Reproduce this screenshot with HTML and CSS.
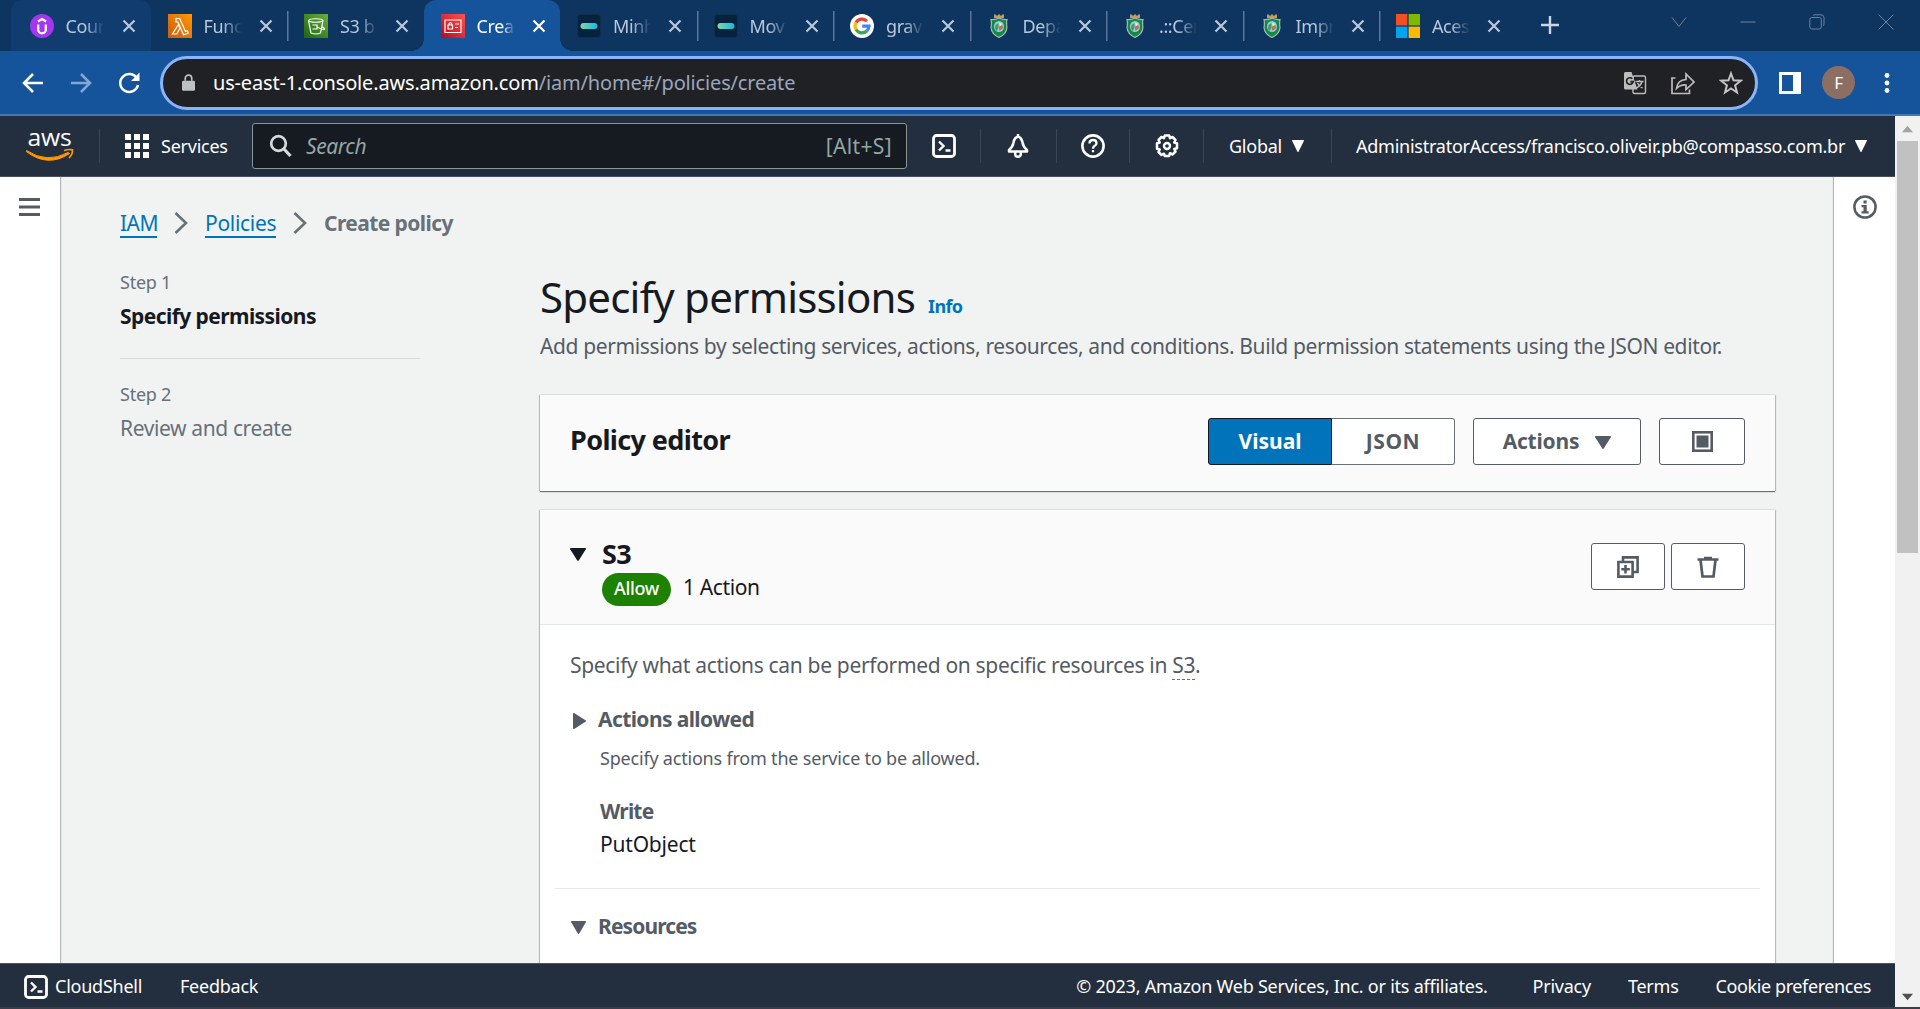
FILE: index.html
```html
<!DOCTYPE html>
<html lang="en">
<head>
<meta charset="utf-8">
<title>Create policy | IAM | Global</title>
<link rel="stylesheet" href="styles.css">
</head>
<body>
<svg class="defs" aria-hidden="true">
  <defs>
    <linearGradient id="gLambda" x1="0" y1="1" x2="1" y2="0"><stop offset="0" stop-color="#cc5a10"/><stop offset="1" stop-color="#ff9900"/></linearGradient>
    <linearGradient id="gS3" x1="0" y1="1" x2="1" y2="0"><stop offset="0" stop-color="#1b660f"/><stop offset="1" stop-color="#6cae3e"/></linearGradient>
    <linearGradient id="gIam" x1="0" y1="1" x2="1" y2="0"><stop offset="0" stop-color="#bd0816"/><stop offset="1" stop-color="#ff5252"/></linearGradient>
    <linearGradient id="gPill" x1="0" y1="0" x2="1" y2="0"><stop offset="0" stop-color="#7fd6a8"/><stop offset="1" stop-color="#12b8e6"/></linearGradient>
    <symbol id="x" viewBox="0 0 24 24"><path d="M6.500 6.500l11 11M17.500 6.500l-11 11" fill="none" stroke="currentColor" stroke-width="2.200"/></symbol>
    <symbol id="pill" viewBox="0 0 24 24"><rect x=".5" y=".5" width="23" height="23" rx="3" fill="#06223d" stroke="#0f3048"/><rect x="3.500" y="9" width="17" height="6" rx="3" fill="url(#gPill)"/></symbol>
    <symbol id="crest" viewBox="0 0 24 24"><path d="M7 .5h2v1h2v-1h2v1h2v-1h2v3.700H7z" fill="#c89a5a"/><path d="M4 5.500Q8 6 12 4q4 2 8 1.500-.8 4 0 8Q19.500 20 12 23.500 4.500 20 4 13.500q.8-4 0-8z" fill="#0f8a4a" stroke="#a9b8ae" stroke-width="1.200"/><ellipse cx="12" cy="12.500" rx="5" ry="5.500" fill="#a3c6cf"/><path d="M8.500 11l3-2v4l-1.500 4-2-2z" fill="#3f9a72"/><path d="M11.500 13l4-2 .5 3-3.500 3z" fill="#b5764a"/><path d="M12 8.500l3 1.500-2 2z" fill="#e8efe9"/></symbol>
    <symbol id="shell" viewBox="0 0 24 24"><rect x="1.500" y="1.500" width="21" height="21" rx="3" fill="none" stroke="currentColor" stroke-width="2.800"/><path d="M7 7.500l4.500 4.500L7 16.500M13.500 16.500h5" fill="none" stroke="currentColor" stroke-width="2.400"/></symbol>
    <symbol id="down" viewBox="0 0 18 16" preserveAspectRatio="none"><path d="M1 0h16a1 1 0 0 1 .8 1.400L10 15.200a1.200 1.200 0 0 1-2 0L.2 1.400A1 1 0 0 1 1 0z" fill="currentColor"/></symbol>
  </defs>
</svg>

<header class="browser">
  <div class="tabs">
    <div class="tab hover"><svg class="fav" viewBox="0 0 24 24"><circle cx="12" cy="12" r="12" fill="#a435f0"/><path d="M8.200 10.500v5a3.800 3.800 0 0 0 7.600 0v-5M8 7.500l4-2.500 4 2.500" fill="none" stroke="#fff" stroke-width="2.300"/></svg><span class="title">Cour</span><svg class="close"><use href="#x"/></svg></div>
    <div class="tab"><svg class="fav" viewBox="0 0 24 24"><path fill="url(#gLambda)" d="M0 0h24v24H0z"/><path d="M8 4.500h3.700l5.800 13 2-.7.800 2.400-4.800 1.600L10 8H8zM10.400 10.800L12 14 8.800 20H4.500z" fill="none" stroke="#fff" stroke-width="1.200"/></svg><span class="title">Func</span><svg class="close"><use href="#x"/></svg></div>
    <div class="tab line"><svg class="fav" viewBox="0 0 24 24"><path fill="url(#gS3)" d="M0 0h24v24H0z"/><path d="M4.500 6.500L7 19q5 2 9.500 0L19 6.500M4.500 6.500a7.300 2 0 0 0 14.500 0 7.300 2 0 0 0-14.500 0zM8.500 11h4.500v4H8.500M13 13q6 3 7.500 2.200.3-1-3-3" fill="none" stroke="#fff" stroke-width="1.200"/></svg><span class="title">S3 b</span><svg class="close"><use href="#x"/></svg></div>
    <div class="tab active"><svg class="fav" viewBox="0 0 24 24"><path fill="url(#gIam)" d="M0 0h24v24H0z"/><path d="M4 6h16v12.500H4zM7 11h4.500v4H7zM8 11V9.500q1.200-1.500 2.500 0V11M14 10h4M14 13.500h3" fill="none" stroke="#fff" stroke-width="1.200"/></svg><span class="title">Crea</span><svg class="close"><use href="#x"/></svg></div>
    <div class="tab"><svg class="fav"><use href="#pill"/></svg><span class="title">Minh</span><svg class="close"><use href="#x"/></svg></div>
    <div class="tab line"><svg class="fav"><use href="#pill"/></svg><span class="title">Mov</span><svg class="close"><use href="#x"/></svg></div>
    <div class="tab line"><svg class="fav" viewBox="0 0 24 24"><circle cx="12" cy="12" r="12" fill="#fff"/><g fill="none" stroke-width="3.200"><path d="M6 8.500A7 7 0 0 1 17 7.200" stroke="#ea4335"/><path d="M6 15.500a7 7 0 0 1 0-7" stroke="#fbbc05"/><path d="M16.800 17A7 7 0 0 1 6 15.500" stroke="#34a853"/><path d="M12.200 12.200H19a7 7 0 0 1-2.200 4.800" stroke="#4285f4"/></g></svg><span class="title">grav</span><svg class="close"><use href="#x"/></svg></div>
    <div class="tab line"><svg class="fav"><use href="#crest"/></svg><span class="title">Depa</span><svg class="close"><use href="#x"/></svg></div>
    <div class="tab line"><svg class="fav"><use href="#crest"/></svg><span class="title">.::Cer</span><svg class="close"><use href="#x"/></svg></div>
    <div class="tab line"><svg class="fav"><use href="#crest"/></svg><span class="title">Impr</span><svg class="close"><use href="#x"/></svg></div>
    <div class="tab line"><svg class="fav" viewBox="0 0 24 24"><path d="M0 0h11.400v11.400H0z" fill="#f25022"/><path d="M12.600 0H24v11.400H12.600z" fill="#7fba00"/><path d="M0 12.600h11.400V24H0z" fill="#00a4ef"/><path d="M12.600 12.600H24V24H12.600z" fill="#ffb900"/></svg><span class="title">Aces</span><svg class="close"><use href="#x"/></svg></div>
    <div class="newtab"><svg width="18" height="18" viewBox="0 0 18 18"><path d="M9 0v18M0 9h18" stroke="#c9d6e6" stroke-width="2.400"/></svg></div>
    <div class="winctl">
      <svg viewBox="0 0 16 16"><path d="M1 3.500l7 9 7-9"/></svg>
      <svg viewBox="0 0 16 16"><path d="M.5 8h15"/></svg>
      <svg viewBox="0 0 16 16"><rect x=".8" y="3.500" width="11.500" height="11.500" rx="2"/><path d="M4 1.500q.5-.7 2-.7h6q3 0 3 3v6q0 1.800-1 2.200"/></svg>
      <svg viewBox="0 0 16 16"><path d="M.5.500l15 15M15.500.500l-15 15"/></svg>
    </div>
  </div>
  <div class="toolbar">
    <svg class="tool" viewBox="0 0 24 24"><path d="M22 12H3M12 3l-9 9 9 9" stroke="#fff"/></svg>
    <svg class="tool fwd" viewBox="0 0 24 24"><path d="M2 12h19M12 3l9 9-9 9" stroke="#86a6d3"/></svg>
    <svg class="tool reload" viewBox="0 0 24 24"><path d="M20 7.500A9 9 0 1 0 21 14" stroke="#fff"/><path d="M22.500 1.500V10H14z" fill="#fff"/></svg>
    <div class="omnibox">
      <svg class="lock" viewBox="0 0 14 18"><path d="M1.500 7h11Q14 7 14 8.500v8q0 1.500-1.500 1.500h-11Q0 18 0 16.500v-8Q0 7 1.500 7z" fill="#bdc1c6"/><path d="M3.500 7V4.500a3.500 3.500 0 0 1 7 0V7" fill="none" stroke="#bdc1c6" stroke-width="1.800"/></svg>
      <span class="url"><b>us-east-1.console.aws.amazon.com</b>/iam/home#/policies/create</span>
      <svg class="oi" viewBox="0 0 24 24"><rect x="10" y="5" width="12.500" height="17.500" rx="1.500" fill="none" stroke="#bdbdbd" stroke-width="1.400"/><path d="M12.500 10.500h8M16.500 9v1.500M19 10.500q-1 4-5.500 6.500M14.500 12q1.500 3.500 5 5" fill="none" stroke="#bdbdbd" stroke-width="1.400"/><path d="M2.500 1H8.500L14.500 18.500h-12Q1 18.500 1 17v-14.500Q1 1 2.500 1z" fill="#bdbdbd"/><path d="M9.300 7.800a3.300 3.300 0 1 0 .8 2.900H7.300" fill="none" stroke="#202124" stroke-width="1.700"/></svg>
      <svg class="oi" viewBox="0 0 24 24"><path d="M4.500 7H1v15.500h17.500v-4M5.500 17.500q1-8.500 9.500-9V3l8 8-8 7.500V14q-5.500-.5-9.500 3.500z" fill="none" stroke="#bdbdbd" stroke-width="1.700"/></svg>
      <svg class="oi" viewBox="0 0 24 24"><path d="M12 2.500l2.500 6.800 7.300.4-5.700 4.600 1.900 7.200-6-4-6 4 1.900-7.200L2.200 9.700l7.300-.4z" fill="none" stroke="#c4c4c4" stroke-width="2"/></svg>
    </div>
    <svg class="side" viewBox="0 0 22 22"><path d="M0 0h22v22H0zM3 3v16h11V3z" fill="#fff" fill-rule="evenodd"/></svg>
    <span class="avatar">F</span>
    <svg class="dots" viewBox="0 0 6 20"><circle cx="3" cy="2.500" r="2.400"/><circle cx="3" cy="10" r="2.400"/><circle cx="3" cy="17.500" r="2.400"/></svg>
  </div>
</header>

<div class="viewport">
  <div class="page">
    <nav class="awsnav">
      <div class="logo"><svg width="48" height="32" viewBox="0 0 48 32"><text x="23.500" y="15" text-anchor="middle" textLength="44" lengthAdjust="spacingAndGlyphs" class="awstext">aws</text><path d="M.5 19.500Q21 33 42 21.500l1.500 1Q22 37 .2 20.500z" fill="#ff9900" stroke="#ff9900"/><path d="M38 19.500q4.500-1.500 8.500-.7.500 4-3.500 8.200" fill="none" stroke="#ff9900" stroke-width="1.700"/></svg></div>
      <i class="sep"></i>
      <svg class="grid9" viewBox="0 0 24 24"><path d="M0 0h6v6H0zM9 0h6v6H9zM18 0h6v6h-6zM0 9h6v6H0zM9 9h6v6H9zM18 9h6v6h-6zM0 18h6v6H0zM9 18h6v6H9zM18 18h6v6h-6z" fill="#fff"/></svg>
      <span class="services">Services</span>
      <div class="search"><svg viewBox="0 0 24 24"><circle cx="9.500" cy="9.500" r="7.300" fill="none" stroke="#d5dbdb" stroke-width="2.700"/><path d="M14.500 14.500l7 7.500" stroke="#d5dbdb" stroke-width="3.200"/></svg><em>Search</em><span class="key">[Alt+S]</span></div>
      <div class="cell c1"><svg><use href="#shell"/></svg></div>
      <div class="cell c2"><svg viewBox="0 0 24 24"><path d="M12 2.500q3.500 1 4.500 6 .7 4.500 4.500 7.500v1.500H3V16q3.800-3 4.500-7.500 1-5 4.500-6zM12 0v3M9.200 18v2a2.800 2.800 0 0 0 5.600 0v-2" fill="none" stroke="#fff" stroke-width="2.500" stroke-linejoin="round"/></svg></div>
      <div class="cell c3"><svg viewBox="0 0 24 24"><circle cx="12" cy="12" r="10.600" fill="none" stroke="#fff" stroke-width="2.600"/><path d="M8.500 9.500q0-3.500 3.500-3.500t3.500 3.200q0 1.800-2 2.900-1.500.9-1.500 2.600M12 16v2.300" fill="none" stroke="#fff" stroke-width="2.300"/></svg></div>
      <div class="cell c4"><svg viewBox="0 0 24 24"><path d="M9.800 1.500h4.400l.8 2.700 2.500-1.200 3 3-1.300 2.500 2.800.8v4.900l-2.700.8 1.200 2.500-3 3-2.500-1.300-.8 2.800H9.800L9 19.700 6.500 21l-3-3 1.300-2.500-2.800-.8V9.300l2.700-.8L3.500 6l3-3L9 4.200z" fill="none" stroke="#fff" stroke-width="2.500" stroke-linejoin="round"/><circle cx="12" cy="12" r="3" fill="none" stroke="#fff" stroke-width="2.400"/></svg></div>
      <div class="global"><span>Global</span><svg><use href="#down"/></svg></div>
      <div class="account"><span>AdministratorAccess/francisco.oliveir.pb@compasso.com.br</span><svg><use href="#down"/></svg></div>
    </nav>

    <div class="main">
      <aside class="rail rail-left"><svg width="21" height="18" viewBox="0 0 21 18"><path d="M0 1.500h21M0 9h21M0 16.500h21" stroke="#545b64" stroke-width="2.800"/></svg></aside>
      <section class="content">
        <div class="crumbs"><a>IAM</a><svg viewBox="0 0 14 22"><path d="M1.500 1l10.500 10L1.500 21"/></svg><a class="pol">Policies</a><svg viewBox="0 0 14 22"><path d="M1.500 1l10.500 10L1.500 21"/></svg><strong>Create policy</strong></div>
        <div class="cols">
          <div class="steps">
            <small>Step 1</small>
            <p class="current">Specify permissions</p>
            <hr>
            <small>Step 2</small>
            <p>Review and create</p>
          </div>
          <div class="wizard">
            <div class="heading"><h1>Specify permissions</h1><a>Info</a></div>
            <p class="desc">Add permissions by selecting services, actions, resources, and conditions. Build permission statements using the JSON editor.</p>
            <div class="card editor">
              <h2>Policy editor</h2>
              <div class="seg"><span class="on">Visual</span><span class="off">JSON</span></div>
              <div class="btn actions">Actions<svg><use href="#down"/></svg></div>
              <div class="btn wide"><svg width="21" height="21" viewBox="0 0 21 21"><rect x="1.300" y="1.300" width="18.400" height="18.400" fill="none" stroke="#545b64" stroke-width="2.600"/><path d="M4.500 4.500h12v12h-12z" fill="#545b64"/></svg></div>
            </div>
            <div class="card service">
              <div class="shead">
                <svg class="tri"><use href="#down"/></svg>
                <div class="sname"><h2>S3</h2><div class="meta"><span class="badge">Allow</span><span class="count">1 Action</span></div></div>
                <div class="btn sq"><svg width="22" height="22" viewBox="0 0 22 22"><path d="M6 5.500V1.400h14.600V16H16" fill="none" stroke="#545b64" stroke-width="2.600"/><path d="M1.400 6h14.200v14.600H1.400zM8.500 9v8.500M4.300 13.300h8.500" fill="none" stroke="#545b64" stroke-width="2.600"/></svg></div>
                <div class="btn sq"><svg width="22" height="22" viewBox="0 0 22 22"><path d="M.5 3.500h21M7 2h8M3.500 4l2 16.500h11l2-16.500" fill="none" stroke="#545b64" stroke-width="2.700"/></svg></div>
              </div>
              <div class="sbody">
                <p class="intro">Specify what actions can be performed on specific resources in <u>S3</u>.</p>
                <h3><svg class="tri-right" viewBox="0 0 13 16"><path d="M0 1a1 1 0 0 1 1.500-.8l11 7a1 1 0 0 1 0 1.600l-11 7A1 1 0 0 1 0 15z" fill="#545b64"/></svg>Actions allowed</h3>
                <div class="allowed">
                  <p class="hint">Specify actions from the service to be allowed.</p>
                  <h4>Write</h4>
                  <p class="act">PutObject</p>
                </div>
                <hr>
                <h3 class="res"><svg class="tri-down"><use href="#down"/></svg>Resources</h3>
              </div>
            </div>
          </div>
        </div>
      </section>
      <aside class="rail rail-right"><svg width="24" height="24" viewBox="0 0 24 24"><circle cx="12" cy="12" r="10.600" fill="none" stroke="#545b64" stroke-width="2.500"/><path d="M10.500 5.500h3.200v3h-3.200zM8.500 10h5.200v6.200h2V18.500H8.500v-2.300h2v-3.900h-2z" fill="#545b64"/></svg></aside>
    </div>

    <footer class="foot">
      <svg><use href="#shell"/></svg><span class="cs">CloudShell</span><span class="fb">Feedback</span>
      <span class="copy">© 2023, Amazon Web Services, Inc. or its affiliates.</span><span class="pr">Privacy</span><span class="te">Terms</span><span class="co">Cookie preferences</span>
    </footer>
  </div>
  <div class="scroll">
    <svg viewBox="0 0 12 8"><path d="M6 1l6 7H0z" fill="#a3a3a3"/></svg>
    <i></i>
    <svg viewBox="0 0 12 8"><path d="M6 8l6-7H0z" fill="#505050"/></svg>
  </div>
</div>
<div class="edge"></div>
</body>
</html>
```
FILE: styles.css
```css
* { box-sizing: border-box; margin: 0; padding: 0; }
body { width: 1920px; height: 1009px; overflow: hidden; display: flex; flex-direction: column; font-family: "Noto Sans", sans-serif; font-size: 21px; line-height: 30px; color: #16191f; letter-spacing: -0.38px; white-space: nowrap; }
svg { flex: none; display: block; }
.defs { position: absolute; width: 0; height: 0; }
hr { border: 0; }

/* Browser chrome */
.tabs { height: 51px; background: #0d355f; display: flex; padding-left: 14px; }
.tab { width: 136.500px; height: 51px; display: flex; align-items: center; padding: 1px 0 0 17px; color: #b9c8db; font-size: 18px; letter-spacing: -0.400px; position: relative; }
.tab.hover { background: #103c70; border-radius: 11px 11px 0 0; box-shadow: -3px 0 #103c70; padding-left: 15.500px; }
.tab.active { background: #15539b; border-radius: 12px 12px 0 0; color: #fff; }
.tab.active::before, .tab.active::after { content: ""; position: absolute; bottom: 0; width: 12px; height: 12px; }
.tab.active::before { left: -12px; background: radial-gradient(circle at 0 0, #0d355f 11.500px, #15539b 12px); }
.tab.active::after { right: -12px; background: radial-gradient(circle at 100% 0, #0d355f 11.500px, #15539b 12px); }
.tab.line { background: linear-gradient(#5b7699, #5b7699) 0 11px / 1.500px 30px no-repeat; }
.fav { width: 24px; height: 24px; }
.title { width: 38px; margin-left: 12px; padding-bottom: 1px; -webkit-mask-image: linear-gradient(90deg, #000 50%, transparent); mask-image: linear-gradient(90deg, #000 50%, transparent); }
.tab.active .title { -webkit-mask-image: linear-gradient(90deg, #000 65%, transparent); mask-image: linear-gradient(90deg, #000 65%, transparent); }
.close { width: 24px; height: 24px; margin-left: 12px; }
.hover .close { margin-left: 13px; }
.newtab { padding: 16px 0 0 25px; }
.winctl { display: flex; gap: 53px; margin-left: auto; padding: 14px 26px 0 0; }
.winctl svg { width: 16px; height: 16px; fill: none; stroke: #71839b; stroke-width: 1; }
.toolbar { height: 65px; background: #15539b; border-bottom: 2px solid #4377b6; display: flex; align-items: center; padding: 0 30px 0 21px; }
.tool { width: 24px; height: 24px; fill: none; stroke-width: 2.500; }
.fwd { margin-left: 24px; }
.reload { margin-left: 24px; }
.omnibox { width: 1598px; height: 54px; margin-left: 19px; border: 3px solid #8ab4f8; border-radius: 27px; background: #202124; display: flex; align-items: center; padding: 0 12px 0 19px; }
.lock { width: 13px; height: 17px; }
.url { flex: 1; margin-left: 18px; font-size: 20px; letter-spacing: -0.170px; color: #9aa6bd; }
.url b { font-weight: 400; color: #fff; }
.oi { width: 24px; height: 24px; margin-left: 24px; }
.side { width: 22px; height: 22px; margin-left: 21px; }
.avatar { width: 33px; height: 33px; border-radius: 50%; background: #8d6e63; color: #fff; font-size: 17px; line-height: 33px; text-align: center; margin-left: 21px; }
.dots { width: 6px; height: 20px; fill: #fff; margin-left: auto; }

/* AWS top navigation */
.viewport { height: 891px; display: flex; }
.page { width: 1895px; display: flex; flex-direction: column; }
.awsnav { height: 61px; background: #232f3e; border-bottom: 1px solid #47505d; display: flex; align-items: center; color: #fff; font-size: 18px; letter-spacing: -0.240px; }
.logo { width: 99px; padding: 2px 0 0 26px; }
.awstext { font: 500 24px "Open Sans", sans-serif; fill: #fff; }
.sep { width: 1px; height: 34px; background: #3a4656; }
.grid9 { width: 24px; height: 24px; margin-left: 25px; }
.services { width: 68px; margin: 0 0 1px 12px; }
.search { width: 655px; height: 46px; margin-left: 23px; background: #161a21; border: 1px solid #879596; border-radius: 3px; display: flex; align-items: center; padding: 0 14px 0 16px; color: #95a5a6; font-size: 21px; }
.search svg { width: 24px; height: 24px; }
.search em { margin-left: 13px; flex: 1; letter-spacing: -0.400px; }
.key { letter-spacing: 0.350px; }
.cell { height: 34px; border-right: 1px solid #3a4656; display: flex; align-items: center; justify-content: center; }
.cell svg { width: 24px; height: 24px; }
.c1 { width: 74px; color: #fff; }
.c2 { width: 76px; padding-right: 2px; }
.c3 { width: 73px; }
.c4 { width: 74px; }
.global { width: 128px; height: 34px; border-right: 1px solid #3a4656; padding-left: 25px; display: flex; align-items: center; }
.global span, .account span { padding-bottom: 1px; }
.global svg, .account svg { width: 12px; height: 12px; margin-left: 10px; }
.account { display: flex; align-items: center; margin-left: 24px; }

/* Workspace */
.main { height: 786px; display: flex; background: #f1f3f3; overflow: hidden; }
.rail { background: #fff; }
.rail-left { width: 60px; padding: 21px 0 0 19px; box-shadow: 1px 0 1px #b4babb; }
.rail-right { width: 61px; margin-left: auto; padding: 18px 0 0 19px; box-shadow: -1px 0 1px #b4babb; }
.content { padding: 31px 0 0 60px; width: 1716px; }
.crumbs { display: flex; height: 30px; color: #687078; }
.crumbs a { color: #0073bb; border-bottom: 2px solid #0073bb; width: 37px; line-height: 31px; letter-spacing: -0.500px; }
.crumbs a.pol { width: 71px; letter-spacing: -0.300px; }
.crumbs svg { width: 14px; height: 28px; margin: 1px 17px; fill: none; stroke: #687078; stroke-width: 2.600; }
.crumbs strong { font-weight: 700; line-height: 31px; letter-spacing: -0.580px; }
.cols { display: flex; margin-top: 32px; }
.steps { width: 300px; color: #687078; }
.steps small { display: block; font-size: 18px; line-height: 24px; letter-spacing: -0.240px; }
.steps p { margin-top: 7px; }
.steps .current { font-weight: 700; color: #16191f; letter-spacing: -0.570px; }
.steps hr { height: 1px; background: #d5dbdb; margin: 27px 0 23px; }
.wizard { width: 1235px; margin-left: 120px; }
.heading { display: flex; align-items: baseline; height: 52px; }
h1 { font-size: 42px; line-height: 53px; font-weight: 400; letter-spacing: -0.780px; }
.heading a { font-size: 18px; font-weight: 700; color: #0073bb; margin-left: 13px; letter-spacing: -0.700px; }
.desc { color: #545b64; margin-top: 9px; }
h2 { font-size: 27px; line-height: 36px; font-weight: 700; letter-spacing: -0.620px; }
.card { background: #fff; box-shadow: 0 1px 1px #687078, 1px 0 1px #c3c9c9, -1px 0 1px #c3c9c9, 0 -1px 0 #e6eaea; }
.editor { height: 96px; margin-top: 34px; background: #fafafa; display: flex; padding: 23px 30px 0 30px; }
.editor h2 { flex: 1; padding-top: 4px; }
.seg { display: flex; height: 47px; width: 247px; letter-spacing: 0; font-weight: 700; }
.seg span { flex: 1; text-align: center; line-height: 44px; border: 1px solid #687078; background: #fff; color: #545b64; }
.seg .on { background: #0073bb; color: #fff; border-color: #16191f; border-radius: 3px 0 0 3px; }
.seg .off { border-left: 0; border-radius: 0 3px 3px 0; letter-spacing: 0.600px; }
.btn { height: 47px; border: 1px solid #545b64; border-radius: 3px; background: #fff; color: #545b64; font-weight: 700; display: flex; align-items: center; justify-content: center; letter-spacing: -0.200px; }
.actions { width: 168px; margin: 0 18px; padding-bottom: 2px; }
.actions svg { width: 16px; height: 13px; margin: 3px 0 0 16px; }
.wide { width: 86px; }
.service { height: 520px; margin-top: 19px; }
.shead { height: 115px; background: #fafafa; border-bottom: 1px solid #e3e7e7; display: flex; gap: 6px; padding: 33px 30px 0 30px; }
.tri { width: 16px; height: 13px; margin-top: 5px; }
.sname { flex: 1; padding-left: 10px; margin-top: -7px; }
.meta { display: flex; margin-top: 1px; }
.badge { width: 69px; height: 33px; border-radius: 17px; background: #1d8102; color: #fff; font-size: 18px; line-height: 31px; font-weight: 500; text-align: center; }
.count { margin-left: 12px; line-height: 29px; }
.sq { width: 74px; }
.sbody { padding: 25px 15px 0; color: #545b64; }
.intro { padding-left: 15px; letter-spacing: -0.330px; }
.intro u { text-decoration: none; border-bottom: 1.500px dashed #687078; }
h3 { display: flex; align-items: center; font-size: 21px; font-weight: 700; padding-left: 16px; margin-top: 24px; letter-spacing: -0.600px; }
.res { letter-spacing: -0.900px; }
.tri-right { width: 13px; height: 16px; margin: 3px 12px 0 2px; }
.tri-down { width: 15px; height: 13px; margin: 3px 12px 0 0; }
.allowed { padding-left: 45px; }
.hint { font-size: 18px; line-height: 24px; margin-top: 12px; letter-spacing: -0.200px; }
h4 { font-size: 21px; font-weight: 700; margin-top: 26px; letter-spacing: -0.800px; }
.act { color: #16191f; margin-top: 3px; letter-spacing: -0.200px; }
.sbody hr { height: 1px; background: #e6e9e9; margin-top: 29px; }
.sbody hr + h3 { margin-top: 22px; }

/* Console footer */
.foot { height: 44px; background: #232f3e; border-top: 1px solid #4b5563; display: flex; align-items: center; padding: 0 24px; color: #fff; font-size: 18px; letter-spacing: -0.240px; }
.foot svg { width: 24px; height: 24px; margin-top: 2px; }
.cs { width: 88px; margin-left: 7px; padding-top: 1px; }
.fb { flex: 1; margin-left: 37px; }
.pr { margin-left: 45px; }
.te { margin-left: 37px; }
.co { margin-left: 37px; letter-spacing: -0.400px; }

/* Page scrollbar */
.scroll { width: 25px; background: #f1f1f1; display: flex; flex-direction: column; align-items: center; padding: 8px 0 6px; }
.scroll svg { width: 11px; height: 9px; }
.scroll i { width: 21px; height: 412px; margin: 8px 0 auto; background: #c1c1c1; }
.edge { height: 2px; background: #3d3d4a; }
```
